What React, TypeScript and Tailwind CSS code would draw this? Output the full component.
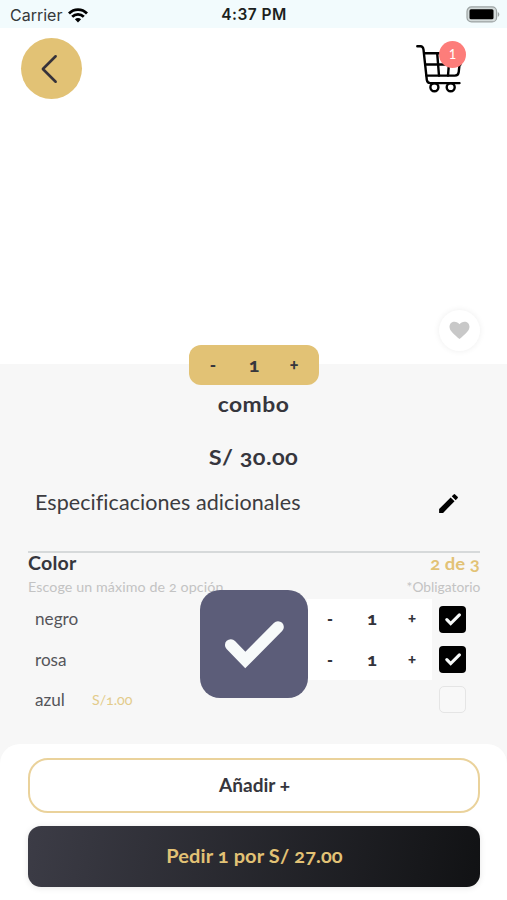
import React from "react";

function Wifi() {
  return (
    <svg width="20" height="15" viewBox="0 0 20 15" fill="none" stroke="#000" strokeWidth="2.8">
      <path d="M1 5.4C6 .3 14 .3 19 5.400" />
      <path d="M4.200 8.800c3.300-3.200 8.300-3.200 11.600 0" />
      <path d="M6.900 11.300c1.800-1.700 4.400-1.700 6.200 0L10 14.500z" fill="#000" stroke="none" />
    </svg>
  );
}

function Battery() {
  return (
    <svg width="34" height="17" viewBox="0 0 34 17">
      <rect x="1" y="0.9" width="29.600" height="15" rx="4.500" fill="#d3dada" stroke="#9ca3a3" strokeWidth="1.200" />
      <rect x="3.500" y="3.300" width="24" height="10" rx="1.500" fill="#000" />
      <path d="M31.800 6c2 .8 2 4 0 4.800z" fill="#9ca3a3" />
    </svg>
  );
}

function Cart() {
  return (
    <svg width="48" height="50" viewBox="0 0 48 50" fill="none" stroke="#000" strokeWidth="2.400" strokeLinecap="round" strokeLinejoin="round">
      <path d="M1.300 2.200h3.200c2 0 2.700 1.300 3 3.500l3.300 30.200c.3 2.300 1.500 3.200 3.500 3.200h29.200" />
      <path d="M8.300 9.300h36.500l-2.100 18.800c-.3 2.500-1.600 3.500-3.800 3.500H10.500" />
      <path d="M9.400 20.500h35M21.200 9.300l1.800 22.300M33.800 9.300L32 31.600" />
      <circle cx="18.400" cy="43.300" r="4" />
      <circle cx="34.700" cy="43.300" r="4" />
    </svg>
  );
}

function Tick({ className }: { className: string }) {
  return (
    <svg className={className} viewBox="0 0 60 49" fill="none" stroke="#f7fafa" strokeWidth="11.700" strokeLinejoin="miter" strokeLinecap="round">
      <path d="M6.800 25L21.300 40 54 7" />
    </svg>
  );
}

function RowStepper() {
  return (
    <div className="mr-[7px] flex h-full w-[125px] items-center bg-white text-[16px] font-black text-[#33333a]">
      <span className="ml-[19px] w-[8px] text-center">-</span>
      <span className="ml-[28px] w-[20px] scale-x-110 text-center text-[17px]">1</span>
      <span className="mb-[3px] ml-[24px] w-[12px] text-center text-[15px]">+</span>
    </div>
  );
}

function Option({ name, price, checked }: { name: string; price?: string; checked?: boolean }) {
  return (
    <div className="flex h-[40.400px] items-center pl-[35px] pr-[41px] text-[#55555a]">
      <span className="origin-left scale-x-[1.04] pt-[1px] text-[16.500px]">{name}</span>
      {price && <span className="ml-[28px] origin-left scale-x-[1.05] text-[13.500px] text-[#e3cb8a]">{price}</span>}
      <div className="ml-auto flex h-full items-center">
        {checked && <RowStepper />}
        {checked ? (
          <div className="flex size-[27px] items-center justify-center rounded-[4px] bg-black">
            <Tick className="h-[13px] w-[16px]" />
          </div>
        ) : (
          <div className="size-[27px] rounded-[5px] border border-[#e5e5e5] bg-[#f8f8f8]" />
        )}
      </div>
    </div>
  );
}

export default function App() {
  return (
    <div className="relative flex h-[900px] w-[507px] flex-col overflow-hidden bg-[#f7f7f7] font-['Lato',sans-serif] text-[#36363d] oldstyle-nums">
      <header className="flex h-[28px] shrink-0 items-center bg-[#f2fbfd] pl-[10px] pr-[7px] font-['Inter',sans-serif] text-[16px] lining-nums text-[#1c1f20]">
        <div className="flex flex-1 items-center gap-[6px] pt-[2px]">
          <span className="text-[#35393a]">Carrier</span>
          <Wifi />
        </div>
        <span className="mr-[2px] pt-[2px] text-[15.500px] font-semibold tracking-[0.450px]">4:37 PM</span>
        <div className="flex flex-1 justify-end">
          <Battery />
        </div>
      </header>

      <section className="flex h-[336px] shrink-0 flex-col justify-between bg-white pb-[13px] pl-[21px] pr-[27px] pt-[10px]">
        <div className="flex items-start justify-between">
          <button className="flex size-[61px] items-center justify-center rounded-full bg-[#e2c275]">
            <svg className="mr-[4px]" width="17" height="30" viewBox="0 0 18 31" fill="none" stroke="#36323a" strokeWidth="2.700" strokeLinecap="round" strokeLinejoin="round">
              <path d="M15.500 2L2 15.500 15.500 29" />
            </svg>
          </button>
          <div className="relative mr-[16px] mt-[6px]">
            <Cart />
            <span className="absolute left-[23px] top-[-3px] flex size-[27px] items-center justify-center rounded-full bg-[#fd7d7a] text-[13px] lining-nums text-white">1</span>
          </div>
        </div>
        <div className="flex size-[41px] items-center justify-center self-end rounded-full bg-white shadow-[0_0_6px_rgba(0,0,0,0.07)]">
          <svg width="21" height="19" viewBox="0 0 22 20" fill="#c8c8c8">
            <path d="M11 19C5.500 14.200.500 10.600.500 6 .500 2.900 2.900.800 5.800.800c2 0 4 1 5.200 2.700C12.200 1.800 14.200.800 16.200.800c2.900 0 5.300 2.100 5.300 5.200 0 4.600-5 8.200-10.500 13z" />
          </svg>
        </div>
      </section>

      <div className="z-10 -mt-[19px] ml-[189px] flex h-[40px] w-[130px] shrink-0 items-center rounded-[12px] bg-[#e2c275] text-[17px] font-black">
        <span className="ml-[20px] w-[8px] text-center">-</span>
        <span className="ml-[27px] w-[20px] scale-x-110 text-center text-[18px]">1</span>
        <span className="mb-[3px] ml-[24px] w-[12px] text-center text-[16px]">+</span>
      </div>

      <h1 className="mt-[6px] scale-x-[1.090] text-center text-[21px] leading-[26px] font-bold tracking-[0.400px]">combo</h1>
      <p className="mt-[27px] scale-x-[1.120] text-center text-[21px] leading-[26px] font-bold tracking-[0.400px]">S/ 30.00</p>

      <div className="mt-[19px] flex h-[28px] shrink-0 items-center justify-between pl-[35px] pr-[46px]">
        <span className="origin-left scale-x-[1.050] pb-[2px] text-[20.500px] tracking-[0.050px] text-[#3c3c40]">Especificaciones adicionales</span>
        <svg className="mt-[1px]" width="25" height="25" viewBox="0 0 24 24" fill="#000">
          <path d="M3 17.250V21h3.750L17.810 9.940l-3.750-3.750L3 17.250zM20.710 7.040a1 1 0 0 0 0-1.410l-2.340-2.340a1 1 0 0 0-1.410 0l-1.830 1.830 3.750 3.750 1.830-1.830z" />
        </svg>
      </div>

      <div className="ml-[28px] mr-[27px] mt-[34px] h-[2px] shrink-0 bg-[#d6d9da]" />
      <div className="flex h-[22px] shrink-0 items-center justify-between pl-[28px] pr-[27px] text-[18px] font-bold">
        <span className="origin-left scale-x-[1.090] pb-[1px] tracking-[0.200px]">Color</span>
        <span className="origin-right scale-x-[1.060] text-[17.500px] text-[#e2c275]">2 de 3</span>
      </div>
      <div className="flex h-[23px] shrink-0 items-center justify-between pl-[28px] pr-[27px] pt-[1px] text-[13.500px] text-[#c3c3c3]">
        <span className="origin-left scale-x-[1.055] tracking-[0.100px]">Escoge un máximo de 2 opción</span>
        <span className="origin-right scale-x-[1.020]">*Obligatorio</span>
      </div>

      <div className="mt-[1px] shrink-0">
        <Option name="negro" checked />
        <Option name="rosa" checked />
        <Option name="azul" price="S/1.00" />
      </div>

      <footer className="absolute inset-x-0 bottom-0 flex h-[156px] flex-col gap-[13px] rounded-t-[20px] bg-white pl-[28px] pr-[27px] pt-[14px] font-bold">
        <button className="h-[55px] w-full rounded-[20px] border-2 border-[#ead29b] text-[18px]">
          <span className="inline-block scale-x-[1.060]">Añadir +</span>
        </button>
        <button className="h-[61px] w-full rounded-[13px] bg-linear-[100deg] from-[#3c3c46] to-[#111214] text-[18px] text-[#e2c275] shadow-[0_1px_6px_rgba(0,0,0,0.1)]">
          <span className="inline-block scale-x-[1.110] tracking-[0.100px]">Pedir 1 por S/ 27.00</span>
        </button>
      </footer>

      <div className="absolute left-[200px] top-[590px] z-20 flex size-[108px] items-center justify-center rounded-[20px] bg-[#5c5d79]">
        <Tick className="h-[49px] w-[60px]" />
      </div>
    </div>
  );
}
